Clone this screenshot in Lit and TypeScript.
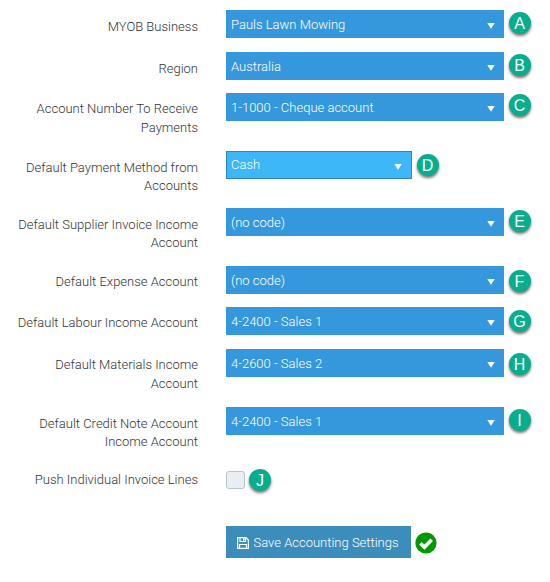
import { LitElement, html, css, nothing } from "lit";
import { customElement, property } from "lit/decorators.js";
import { classMap } from "lit/directives/class-map.js";
import { styleMap } from "lit/directives/style-map.js";

interface Field {
  label: string[];
  value: string;
  badge: string;
  height: number;
  lift: number;
  active?: boolean;
  low?: boolean;
  tight?: boolean;
}

const FIELDS: Field[] = [
  { label: ["MYOB Business"], value: "Pauls Lawn Mowing", badge: "A", height: 42, lift: 2, low: true },
  { label: ["Region"], value: "Australia", badge: "B", height: 41, lift: 1.5, low: true },
  { label: ["Account Number To Receive", "Payments"], value: "1-1000 - Cheque account", badge: "C", height: 58, lift: 1 },
  { label: ["Default Payment Method from", "Accounts"], value: "Cash", badge: "D", height: 57, lift: 2.5, active: true, tight: true },
  { label: ["Default Supplier Invoice Income", "Account"], value: "(no code)", badge: "E", height: 58, lift: 2, tight: true },
  { label: ["Default Expense Account"], value: "(no code)", badge: "F", height: 41, lift: 3.5 },
  { label: ["Default Labour Income Account"], value: "4-2400 - Sales 1", badge: "G", height: 42, lift: 3 },
  { label: ["Default Materials Income", "Account"], value: "4-2600 - Sales 2", badge: "H", height: 58, lift: 4 },
  { label: ["Default Credit Note Account", "Income Account"], value: "4-2400 - Sales 1", badge: "I", height: 57, lift: 1.5, tight: true },
];

@customElement("step-badge")
export class StepBadge extends LitElement {
  @property() letter = "";
  static styles = css`
    :host {
      display: flex;
      flex: none;
      box-sizing: border-box;
      align-items: center;
      justify-content: center;
      width: 22px;
      height: 22px;
      padding-top: 1px;
      border-radius: 50%;
      background: #07ae8e;
      color: #fff;
      font: 400 16px/21px "Liberation Sans", Arial, sans-serif;
      box-shadow: 0 2px 3px rgba(0, 0, 0, 0.55);
    }
  `;
  render() {
    return html`${this.letter}`;
  }
}

@customElement("select-box")
export class SelectBox extends LitElement {
  @property() value = "";
  @property({ type: Boolean }) active = false;
  static styles = css`
    :host {
      display: block;
      flex: none;
    }
    .box {
      box-sizing: border-box;
      display: flex;
      justify-content: space-between;
      width: 278px;
      height: 28px;
      padding: 0 9px 0 5px;
      background: #3598dc;
      color: #fff;
      line-height: 29px;
    }
    .active {
      width: 186px;
      padding: 0 9px 0 4px;
      border: 1px solid #2f86c5;
      background: #3db7f7;
      line-height: 26px;
    }
    .arrow {
      flex: none;
      width: 8px;
      height: 6px;
      margin-top: 13px;
      fill: #fff;
    }
    .active .arrow {
      margin-top: 12px;
    }
  `;
  render() {
    return html`<div class=${classMap({ box: true, active: this.active })}>
      <span>${this.value}</span>
      <svg class="arrow" viewBox="0 0 8 6"><path d="M0.3 0H7.7L4 5.8Z" /></svg>
    </div>`;
  }
}

@customElement("app-root")
export class AppRoot extends LitElement {
  static styles = css`
    :host {
      display: block;
      box-sizing: border-box;
      width: 550px;
      height: 582px;
      padding-top: 10px;
      background: #fff;
      color: #333;
      font: 300 13px/18.5px Roboto, sans-serif;
    }
    .row {
      display: flex;
      align-items: flex-start;
    }
    .label {
      flex: none;
      width: 198px;
      padding-top: 7.4px;
      margin-right: 28px;
      text-align: right;
      white-space: nowrap;
    }
    .low {
      padding-top: 8.4px;
    }
    .tight {
      padding-top: 7.6px;
      line-height: 18px;
    }
    .badge {
      margin-left: 4.5px;
    }
    .check-row {
      height: 62px;
    }
    .checkbox {
      box-sizing: border-box;
      flex: none;
      width: 19px;
      height: 18px;
      margin-top: 7px;
      border: 1px solid #b8c4cb;
      border-radius: 3px;
      background: #e9eef2;
    }
    .check-badge {
      margin-top: 4.5px;
      margin-left: 4px;
    }
    .actions {
      display: flex;
      align-items: center;
      padding-left: 226px;
    }
    .save {
      display: flex;
      align-items: center;
      box-sizing: border-box;
      width: 185px;
      height: 32px;
      margin: 0;
      padding: 2px 0 0 11px;
      border: 0;
      background: #3c8dbc;
      color: #fff;
      font: inherit;
      white-space: nowrap;
    }
    .disk {
      flex: none;
      width: 12px;
      height: 12px;
      margin-right: 4.5px;
    }
    .ok {
      width: 22px;
      height: 22px;
      margin: 1px 0 0 4px;
    }
  `;

  renderLabel(lines: string[], low = false, tight = false) {
    return html`<div class=${classMap({ label: true, low, tight })}>
      ${lines.map((line, i) => html`${i ? html`<br />` : nothing}${line}`)}
    </div>`;
  }

  render() {
    return html`
      ${FIELDS.map(
        (f) => html`<div class="row" style=${styleMap({ height: `${f.height}px` })}>
          ${this.renderLabel(f.label, f.low, f.tight)}
          <select-box .value=${f.value} .active=${!!f.active}></select-box>
          <step-badge class="badge" .letter=${f.badge} style=${styleMap({ marginTop: `${f.lift}px` })}></step-badge>
        </div>`
      )}
      <div class="row check-row">
        ${this.renderLabel(["Push Individual Invoice Lines"])}
        <div class="checkbox"></div>
        <step-badge class="badge check-badge" .letter=${"J"}></step-badge>
      </div>
      <div class="actions">
        <button class="save">
          <svg class="disk" viewBox="0 0 12 12" fill="none" stroke="#fff" stroke-width="1.2">
            <path d="M0.6 0.6H9L11.4 3V11.4H0.6Z" />
            <path d="M3 0.5V4.5H8.5V0.5M2.5 11.5V7.5H9.5V11.5" />
            <path d="M6 1H7.5V3.5H6Z" fill="#fff" stroke="none" />
          </svg>
          Save Accounting Settings
        </button>
        <svg class="ok" viewBox="0 0 22 22">
          <circle cx="11" cy="11" r="10.6" fill="#090" />
          <path d="M5.4 11.2L9.4 15.1L16.7 7.8" fill="none" stroke="#fff" stroke-width="3.6" />
        </svg>
      </div>
    `;
  }
}
